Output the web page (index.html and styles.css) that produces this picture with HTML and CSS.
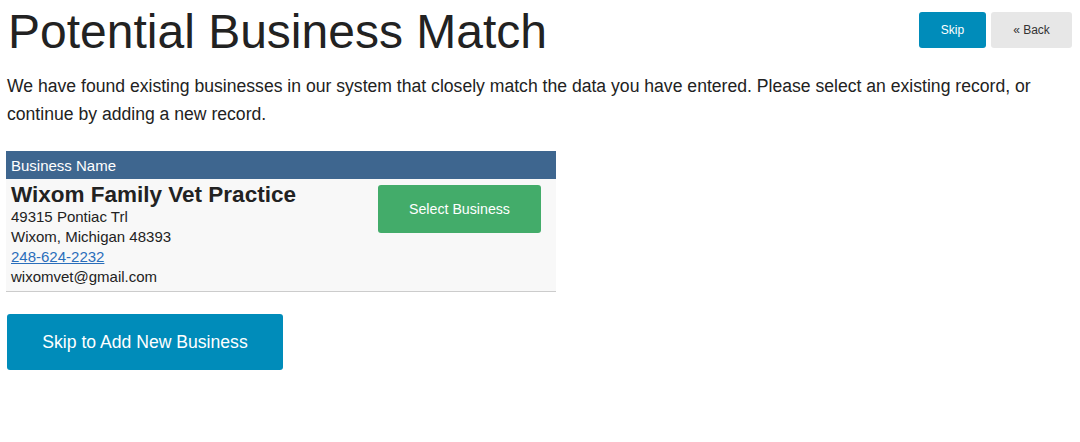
FILE: index.html
```html
<!DOCTYPE html>
<html>
<head>
    <title>Potential Business Match</title>
    <link rel="stylesheet" href="styles.css">
</head>
<body>
    <div class="page">
        <div class="top-actions">
            <a href="#" class="button small primary">Skip</a>
            <a href="#" class="button small secondary">&laquo; Back</a>
        </div>

        <h1>Potential Business Match</h1>

        <p class="intro">We have found existing businesses in our system that closely match the data you have entered. Please select an existing record, or continue by adding a new record.</p>

        <table class="matches">
            <thead>
                <tr><th>Business Name</th></tr>
            </thead>
            <tbody>
                <tr>
                    <td>
                        <div class="match-row">
                            <div class="match-info">
                                <div class="match-name">Wixom Family Vet Practice</div>
                                <div>49315 Pontiac Trl</div>
                                <div>Wixom, Michigan 48393</div>
                                <div><a href="#" class="phone">248-624-2232</a></div>
                                <div>wixomvet@gmail.com</div>
                            </div>
                            <a href="#" class="button select">Select Business</a>
                        </div>
                    </td>
                </tr>
            </tbody>
        </table>

        <a href="#" class="button large primary">Skip to Add New Business</a>
    </div>
</body>
</html>
```

FILE: styles.css
```css
body {
    font-family: "Liberation Sans", Arial, sans-serif;
    color: #222;
    background-color: #fff;
    margin: 0;
}

.page {
    position: relative;
    padding: 0 7px;
}

h1 {
    font-size: 48px;
    font-weight: normal;
    line-height: 1;
    margin: 8px 0 0 0;
    padding-left: 1px;
    color: #222;
}

.intro {
    font-size: 17.6px;
    line-height: 28px;
    margin: 16px 0 23px 0;
}

.top-actions {
    position: absolute;
    top: 4px;
    right: 8px;
    display: flex;
    gap: 5px;
}

.button {
    display: inline-block;
    text-decoration: none;
    color: #fff;
    text-align: center;
    border-radius: 3px;
    box-sizing: border-box;
}

.button.small {
    height: 36px;
    line-height: 36px;
    font-size: 12px;
}

.button.primary {
    background-color: #008cba;
}

.top-actions .primary {
    width: 67px;
}

.button.secondary {
    background-color: #e7e7e7;
    color: #333;
    width: 81px;
}

.matches {
    border-collapse: collapse;
    width: 550px;
    margin-left: -1px;
    font-size: 15px;
}

.matches th {
    background-color: #3e668f;
    color: #fff;
    font-weight: normal;
    text-align: left;
    height: 28px;
    padding: 0 5px;
    font-size: 15px;
}

.matches td {
    background-color: #f8f8f8;
    border-bottom: 1px solid #ccc;
    padding: 5px 5px 4px 5px;
}

.match-row {
    display: flex;
    justify-content: space-between;
    align-items: flex-start;
}

.match-info {
    line-height: 20px;
    color: #222;
}

.match-name {
    font-size: 22.5px;
    font-weight: bold;
    line-height: 22px;
    margin-bottom: 1px;
}

.phone {
    color: #2a6ebb;
    text-decoration: underline;
}

.button.select {
    background-color: #43ac6a;
    width: 163px;
    height: 48px;
    line-height: 48px;
    font-size: 14.2px;
    margin: 1px 10px 0 0;
}

.button.large {
    margin-top: 22px;
    width: 276px;
    height: 56px;
    line-height: 56px;
    font-size: 17.6px;
}
```
